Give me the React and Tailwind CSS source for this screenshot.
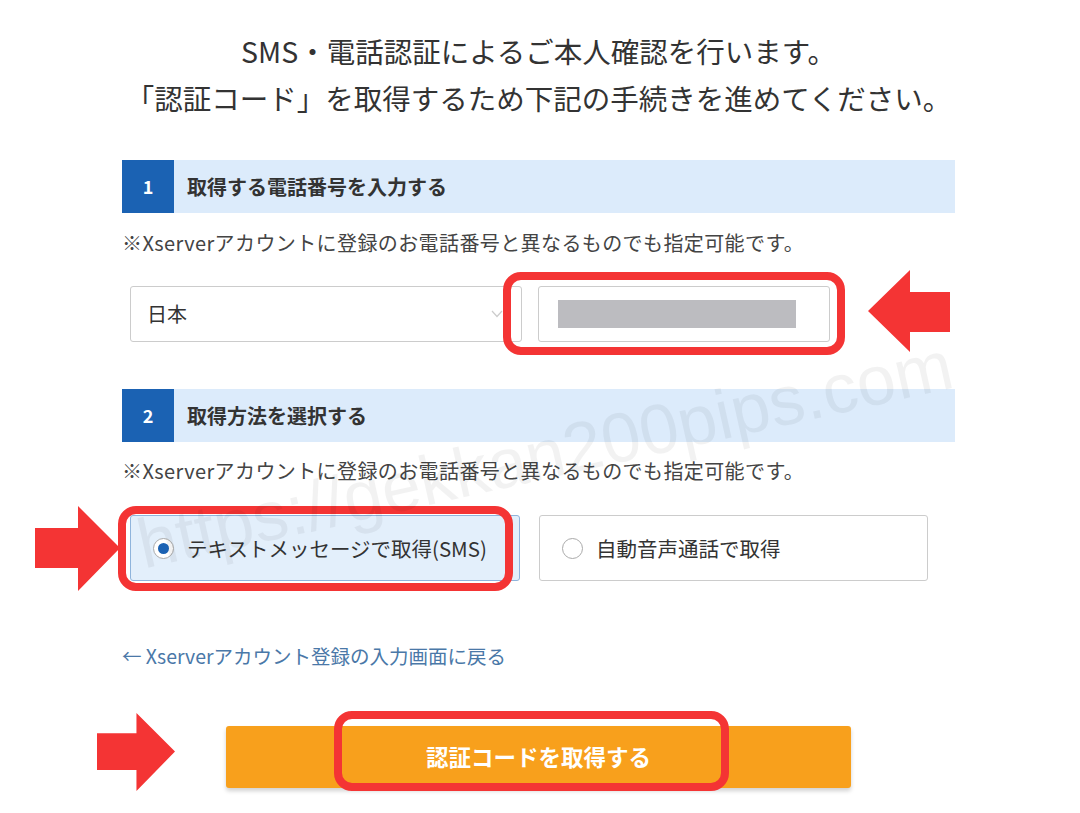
import React from "react";

const jp = { fontFamily: '"Noto Sans CJK JP", "Noto Sans", sans-serif' };

const RedBox = ({ className }) => (
  <div className={`absolute border-[8px] border-[#f43434] rounded-[18px] pointer-events-none ${className}`} />
);

const ArrowLeft = ({ className }) => (
  <svg className={`absolute pointer-events-none ${className}`} viewBox="0 0 82 82">
    <polygon points="0,41 42,0 42,22 82,22 82,62 42,62 42,82" fill="#f43434" />
  </svg>
);

const ArrowRight = ({ className }) => (
  <svg className={`absolute pointer-events-none ${className}`} viewBox="0 0 85 85">
    <polygon points="0,22 43,22 43,0 85,42 43,85 43,62 0,62" fill="#f43434" />
  </svg>
);

const SectionHeader = ({ num, title }) => (
  <div className="flex h-[53px] bg-[#dcebfb]">
    <div className="w-[52px] bg-[#1b62b3] text-white font-bold text-[18px] flex items-center justify-center">
      {num}
    </div>
    <div className="pl-[13px] flex items-center font-bold text-[20px] text-[#333]">{title}</div>
  </div>
);

const Radio = ({ checked }) => (
  <span className="w-[21px] h-[21px] rounded-full border-[1.5px] border-[#aaa] bg-white flex items-center justify-center shrink-0">
    {checked && <span className="w-[11px] h-[11px] rounded-full bg-[#1b62b3]" />}
  </span>
);

export default function App() {
  return (
    <div className="relative min-h-[813px] bg-white overflow-hidden text-[#333]" style={jp}>
      <div className="relative w-[833px] ml-[122px] pt-[27px]">
        <h1 className="text-center text-[28.5px] leading-[47px] font-normal text-[#333]">
          SMS・電話認証によるご本人確認を行います。
          <br />
          「認証コード」を取得するため下記の手続きを進めてください。
        </h1>

        <div className="mt-[39px]">
          <SectionHeader num="1" title="取得する電話番号を入力する" />
        </div>
        <p className="mt-[15px] text-[20px] tracking-[0.4px] leading-[30px] text-[#444]">
          ※Xserverアカウントに登録のお電話番号と異なるものでも指定可能です。
        </p>

        <div className="relative mt-[28px] ml-2 flex gap-[16px] h-[56px]">
          <div className="w-[392px] border border-[#ccc] rounded-[3px] flex items-center justify-between pl-[16px] pr-[18px]">
            <span className="text-[20px]">日本</span>
            <svg width="12" height="8" viewBox="0 0 12 8">
              <polyline points="1,1 6,6.5 11,1" fill="none" stroke="#ccc" strokeWidth="1.2" />
            </svg>
          </div>
          <div className="w-[292px] border border-[#ccc] rounded-[3px] flex items-center pl-[19px]">
            <div className="w-[238px] h-[28px] bg-[#bcbcc0]" />
          </div>
          <RedBox className="left-[373px] -top-[14px] w-[342px] h-[83px]" />
          <ArrowLeft className="left-[738px] -top-[16px] w-[82px] h-[82px]" />
        </div>

        <div className="mt-[47px]">
          <SectionHeader num="2" title="取得方法を選択する" />
        </div>
        <p className="mt-[14px] text-[20px] tracking-[0.4px] leading-[30px] text-[#444]">
          ※Xserverアカウントに登録のお電話番号と異なるものでも指定可能です。
        </p>

        <div className="relative mt-[29px] ml-2 flex gap-[19px] h-[66px]">
          <label className="w-[390px] bg-[#e3effb] border border-[#8fb4dc] rounded-[3px] flex items-center gap-[13px] pl-[22px]">
            <Radio checked />
            <span className="text-[20.5px]">テキストメッセージで取得(SMS)</span>
          </label>
          <label className="w-[389px] bg-white border border-[#ccc] rounded-[3px] flex items-center gap-[13px] pl-[22px]">
            <Radio />
            <span className="text-[20.5px]">自動音声通話で取得</span>
          </label>
          <RedBox className="-left-[12px] -top-[9px] w-[395px] h-[85px]" />
          <ArrowRight className="-left-[95px] -top-[9px] w-[85px] h-[85px]" />
        </div>

        <a className="block mt-[60px] text-[19.5px] leading-[30px] text-[#4a78a8]">
          ← Xserverアカウント登録の入力画面に戻る
        </a>

        <div className="relative mt-[55px] mx-auto w-[625px] h-[62px]">
          <button className="w-full h-full bg-[#f8a01c] rounded-[3px] shadow-[0_3px_4px_rgba(0,0,0,0.18)] text-white font-bold text-[22.5px]">
            認証コードを取得する
          </button>
          <RedBox className="left-[108px] -top-[15px] w-[395px] h-[80px]" />
          <ArrowRight className="-left-[133px] -top-[13px] w-[86px] h-[78px]" />
        </div>
      </div>

      <div
        className="absolute left-[545px] top-[455px] -translate-x-1/2 -translate-y-1/2 -rotate-[12.6deg] text-[70px] text-black/[0.05] whitespace-nowrap pointer-events-none"
        style={{ fontFamily: '"Liberation Sans", sans-serif' }}
      >
        https://gekkan200pips.com
      </div>
    </div>
  );
}
